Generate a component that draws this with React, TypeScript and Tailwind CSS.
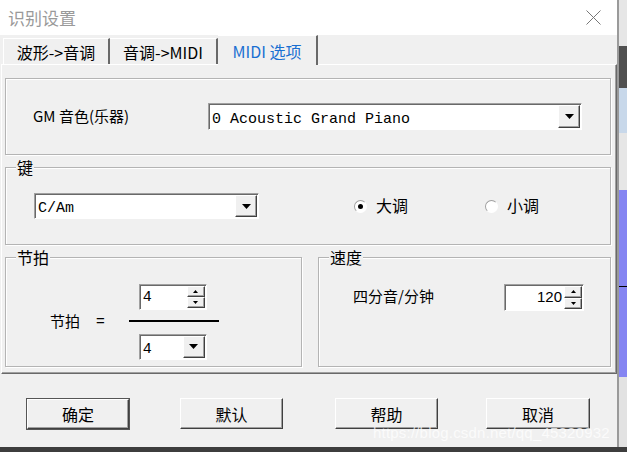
import React from "react";

const cjk = "font-['Noto_Sans_CJK_SC','Noto_Sans',sans-serif]";
const mono = "font-['Liberation_Mono','Noto_Sans_CJK_SC',monospace]";

const raised =
  "border border-t-white border-l-white border-r-[#404040] border-b-[#404040] shadow-[inset_-1px_-1px_0_#a0a0a0] bg-[#f0f0f0]";
const sunken =
  "border border-t-[#a0a0a0] border-l-[#a0a0a0] border-r-white border-b-white shadow-[inset_1px_1px_0_#696969] bg-white";
const group =
  "relative border border-[#b4b4b4] shadow-[inset_1px_1px_0_#ffffff,1px_1px_0_#ffffff]";

const DownArrow = ({ small }: { small?: boolean }) =>
  small ? (
    <svg width="5" height="3" viewBox="0 0 5 3">
      <polygon points="0,0 5,0 2.5,3" fill="#000" />
    </svg>
  ) : (
    <svg width="9" height="5" viewBox="0 0 9 5">
      <polygon points="0,0 9,0 4.5,5" fill="#000" />
    </svg>
  );

const UpArrow = () => (
  <svg width="5" height="3" viewBox="0 0 5 3">
    <polygon points="0,3 5,3 2.5,0" fill="#000" />
  </svg>
);

const Legend = ({ text }: { text: string }) => (
  <span className={`absolute left-[10px] top-[-11px] bg-[#f0f0f0] px-[1px] text-[16px] leading-[20px] ${cjk}`}>
    {text}
  </span>
);

const Combo = ({ text, className }: { text: string; className: string }) => (
  <div className={`flex ${sunken} ${className}`}>
    <div className={`flex flex-1 items-center pl-[3px] pt-[5px] text-[15px] leading-none text-black ${mono}`}>{text}</div>
    <div className="flex items-center p-[1px]">
      <div className={`flex h-full w-[22px] items-center justify-center ${raised}`}>
        <DownArrow />
      </div>
    </div>
  </div>
);

const Spin = ({ text, className, right }: { text: string; className: string; right?: boolean }) => (
  <div className={`flex ${sunken} ${className}`}>
    <div
      className={`flex flex-1 items-center text-[15px] text-black ${
        right ? "justify-end pr-[1px] font-['Liberation_Sans',sans-serif]" : `pl-[3px] pt-[3px] ${mono}`
      }`}
    >
      {text}
    </div>
    <div className="flex w-[20px] flex-col p-[1px]">
      <div className={`flex flex-1 items-center justify-center ${raised}`}>
        <UpArrow />
      </div>
      <div className={`flex flex-1 items-center justify-center ${raised}`}>
        <DownArrow small />
      </div>
    </div>
  </div>
);

const Radio = ({ checked, label }: { checked?: boolean; label: string }) => (
  <div className="flex items-center">
    <span className="flex h-[13px] w-[13px] items-center justify-center rounded-full border border-t-[#a0a0a0] border-l-[#a0a0a0] border-r-white border-b-white bg-white">
      {checked && <span className="h-[5px] w-[5px] rounded-full bg-black" />}
    </span>
    <span className={`ml-[9px] mb-[2px] text-[16px] leading-none ${cjk}`}>{label}</span>
  </div>
);

const Button = ({ label, isDefault, className }: { label: string; isDefault?: boolean; className: string }) => (
  <div className={`${isDefault ? "border border-[#555]" : ""} ${className}`}>
    <div className={`flex h-full w-full items-center justify-center text-[16px] leading-none text-black ${cjk} ${raised}`}>
      {label}
    </div>
  </div>
);

const App = () => {
  return (
    <div className="relative flex h-[452px] w-[627px] overflow-hidden bg-[#3d3d3d]">
      {/* dialog */}
      <div className="flex h-[447px] w-[619px] flex-col border-r-2 border-[#9a9a9a] bg-[#f0f0f0]">
        <div className="flex h-[35px] items-center justify-between bg-white pl-[8px] pr-[16px]">
          <span className={`text-[17px] text-[#9a9a9a] ${cjk}`}>识别设置</span>
          <svg width="15" height="15" viewBox="0 0 15 15">
            <path d="M0.5 0.5 L14.5 14.5 M14.5 0.5 L0.5 14.5" stroke="#777" strokeWidth="1" />
          </svg>
        </div>

        {/* tabs */}
        <div className="flex h-[29px] items-end pl-[3px]">
          <div className={`flex h-[26px] w-[107px] items-center justify-center border-t border-l border-t-white border-l-white border-r-2 border-r-[#696969] text-[16px] ${cjk}`}>
            波形-&gt;音调
          </div>
          <div className={`flex h-[26px] w-[108px] items-center justify-center border-t border-t-white border-r-2 border-r-[#696969] text-[16px] ${cjk}`}>
            音调-&gt;MIDI
          </div>
          <div className={`relative z-10 mb-[-1px] flex h-[30px] w-[100px] items-center justify-center border-t border-t-white border-r-2 border-r-[#696969] bg-[#f0f0f0] text-[16px] text-[#1a6fd2] ${cjk}`}>
            MIDI 选项
          </div>
        </div>

        {/* tab panel */}
        <div className="ml-[1px] flex h-[310px] flex-col border border-t-white border-l-white border-r-[#696969] border-b-[#696969] pt-[13px] pl-[3px] pr-[5px] shadow-[inset_-1px_-1px_0_#a0a0a0]">
          <div className={`flex h-[77px] items-center pl-[27px] ${group}`}>
            <span className={`w-[175px] text-[15px] ${cjk}`}>GM 音色(乐器)</span>
            <Combo text="0 Acoustic Grand Piano" className="h-[27px] w-[374px]" />
          </div>

          <div className={`mt-[12px] flex h-[78px] items-center pl-[28px] ${group}`}>
            <Legend text="键" />
            <Combo text="C/Am" className="h-[26px] w-[225px]" />
            <div className="ml-[95px]">
              <Radio checked label="大调" />
            </div>
            <div className="ml-[77px]">
              <Radio label="小调" />
            </div>
          </div>

          <div className="mt-[12px] flex h-[110px] gap-[16px]">
            <div className={`flex w-[297px] items-center pt-[25px] pb-[6px] pl-[44px] ${group}`}>
              <Legend text="节拍" />
              <span className={`text-[15px] ${cjk}`}>节拍</span>
              <span className="ml-[16px] text-[15px] font-['Liberation_Sans',sans-serif]">=</span>
              <div className="ml-[24px] flex w-[90px] flex-col items-center">
                <Spin text="4" className="ml-[-2px] h-[26px] w-[68px]" />
                <div className="mt-[10px] h-[2px] w-[90px] bg-black" />
                <Combo text="4" className="ml-[-2px] mt-[12px] h-[26px] w-[68px]" />
              </div>
            </div>
            <div className={`flex flex-1 items-start pt-[26px] pl-[34px] ${group}`}>
              <Legend text="速度" />
              <span className={`w-[151px] pt-[1px] text-[15px] ${cjk}`}>四分音/分钟</span>
              <Spin text="120" right className="h-[27px] w-[80px]" />
            </div>
          </div>
        </div>

        {/* buttons */}
        <div className="flex pt-[24px] pl-[26px]">
          <Button label="确定" isDefault className="h-[32px] w-[104px]" />
          <Button label="默认" className="ml-[50px] h-[31px] w-[103px]" />
          <Button label="帮助" className="ml-[52px] h-[31px] w-[103px]" />
          <Button label="取消" className="ml-[48px] h-[31px] w-[104px]" />
        </div>
      </div>

      {/* background beyond the dialog */}
      <div className="flex flex-1 flex-col">
        <div className="h-[46px] bg-[#e6e6e6]" />
        <div className="h-[42px] bg-[#505050]" />
        <div className="h-[45px] bg-[#c8d8ea]" />
        <div className="h-[57px] bg-[#e6e6e6]" />
        <div className="h-[187px] bg-[#8585f2] pt-[96px]">
          <div className="h-[1px] bg-black" />
        </div>
        <div className="h-[70px] bg-[#e2e2e2]" />
      </div>

      <span className="pointer-events-none absolute left-[373px] top-[425px] text-[15px] leading-none tracking-[0.2px] text-white/75 font-['Liberation_Sans',sans-serif]">
        https://blog.csdn.net/qq_45320932
      </span>
    </div>
  );
};

export default App;
